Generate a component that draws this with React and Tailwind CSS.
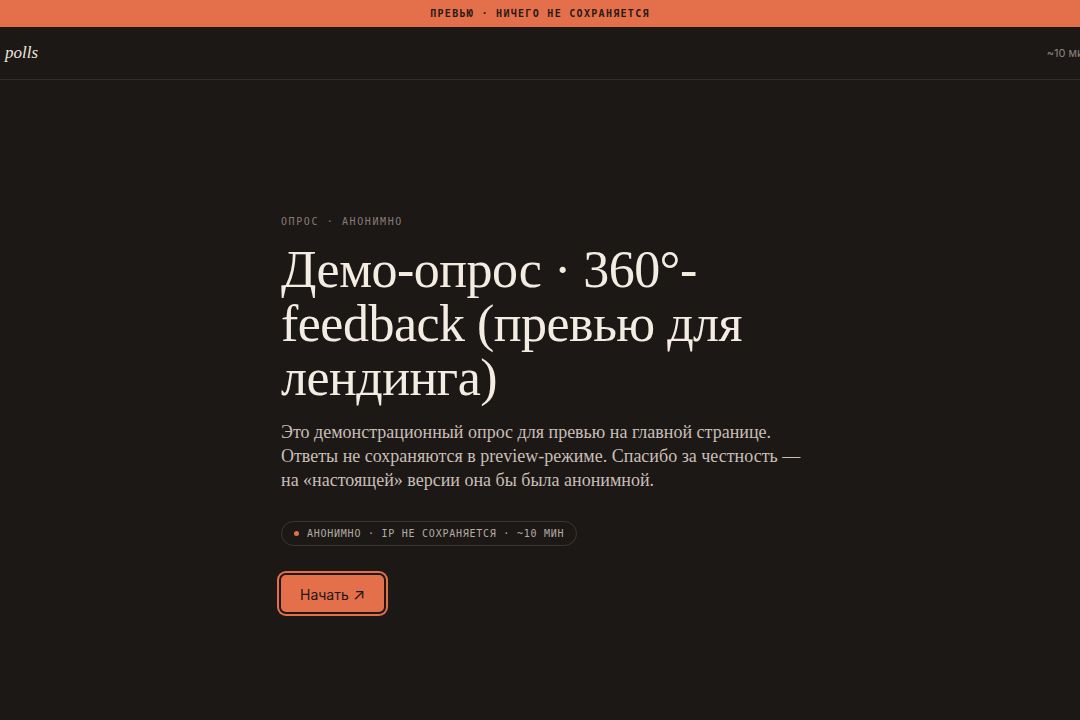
import React from "react";

const serif = { fontFamily: '"Liberation Serif", "DejaVu Serif", serif' };
const mono = { fontFamily: '"DejaVu Sans Mono", "Liberation Mono", monospace' };
const sans = { fontFamily: 'Inter, "Noto Sans", sans-serif' };

const Banner = () => (
  <div
    className="h-[27px] bg-[#e4704b] flex items-center justify-center text-[10px] font-bold tracking-[0.13em] text-[#2a1a14]"
    style={mono}
  >
    ПРЕВЬЮ · НИЧЕГО НЕ СОХРАНЯЕТСЯ
  </div>
);

const Header = () => (
  <div className="h-[53px] border-b border-[#332d2a] overflow-hidden">
    <div className="-ml-[14px] -mr-[10px] h-full flex items-center justify-between">
      <div className="flex items-center gap-[6px]">
        <span className="text-[#e4704b] text-[15px]" style={serif}>✦</span>
        <span className="italic text-[17px] text-[#ece5dc]" style={serif}>
          polls
        </span>
      </div>
      <span className="text-[11px] text-[#8c837c]" style={sans}>
        ~10 мин
      </span>
    </div>
  </div>
);

export default function App() {
  return (
    <div className="min-h-screen w-full bg-[#1c1816] overflow-hidden">
      <Banner />
      <Header />
      <main className="pl-[281px] pt-[134px]">
        <div className="w-[520px]">
          <div
            className="text-[10px] tracking-[0.16em] text-[#867d77]"
            style={mono}
          >
            ОПРОС · АНОНИМНО
          </div>
          <h1
            className="mt-[14px] text-[52px] leading-[54px] text-[#f3ece3] tracking-[-0.01em]"
            style={serif}
          >
            Демо-опрос · 360°-feedback (превью для лендинга)
          </h1>
          <p
            className="mt-[15px] w-[530px] text-[18px] leading-[24px] text-[#c8bfb6]"
            style={serif}
          >
            Это демонстрационный опрос для превью на главной странице. Ответы не
            сохраняются в preview-режиме. Спасибо за честность — на «настоящей»
            версии она бы была анонимной.
          </p>
          <div className="mt-[26px]">
            <span
              className="inline-flex items-center gap-[8px] h-[25px] px-[12px] rounded-full border border-[#3d3633] text-[10px] tracking-[0.075em] text-[#b5aca4]"
              style={mono}
            >
              <span className="w-[5px] h-[5px] rounded-full bg-[#e4704b]" />
              АНОНИМНО · IP НЕ СОХРАНЯЕТСЯ · ~10 МИН
            </span>
          </div>
          <div className="mt-[27px] -ml-[2px]">
            <button
              className="h-[41px] px-[19px] rounded-[7px] bg-[#e4704b] border-2 border-[#1c1816] ring-2 ring-[#e4704b] text-[14px] text-[#1f1712]"
              style={sans}
            >
              Начать <span className="text-[16px]">↗</span>
            </button>
          </div>
        </div>
      </main>
    </div>
  );
}
